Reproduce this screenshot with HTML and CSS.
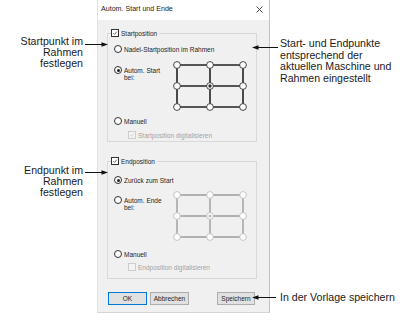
FILE: index.html
```
<!DOCTYPE html>
<html lang="de">
<head>
    <meta charset="UTF-8">
    <title>Autom. Start und Ende</title>
    <link rel="stylesheet" href="styles.css">
</head>
<body>
<div class="page">
    <div class="notes-left">
        <div class="note note-start">
            Startpunkt im<br>Rahmen<br>festlegen
            <svg class="arrow arrow-in" width="23" height="7" viewBox="0 0 23 7"><path d="M0 3.5H18" stroke="#111"/><path d="M23 3.5L16.5 1.2V5.8Z" fill="#111"/></svg>
        </div>
        <div class="note note-end">
            Endpunkt im<br>Rahmen<br>festlegen
            <svg class="arrow arrow-in" width="23" height="7" viewBox="0 0 23 7"><path d="M0 3.5H18" stroke="#111"/><path d="M23 3.5L16.5 1.2V5.8Z" fill="#111"/></svg>
        </div>
    </div>

    <div class="dialog">
        <div class="titlebar">
            <span>Autom. Start und Ende</span>
            <svg class="close" width="7" height="7" viewBox="0 0 7 7"><path d="M0.5 0.5L6.5 6.5M6.5 0.5L0.5 6.5" stroke="#333" stroke-width="0.9"/></svg>
        </div>

        <div class="dialog-body">
            <!-- Startposition -->
            <div class="group group-start">
                <div class="group-title">
                    <span class="check"><svg viewBox="0 0 8 8"><path d="M1.6 4.1L3.3 5.8L6.5 2.1" fill="none" stroke="#222" stroke-width="0.9"/></svg></span>
                    Startposition
                </div>
                <div class="row row-first">
                    <span class="radio"></span>Nadel-Startposition im Rahmen
                </div>
                <div class="row-auto">
                    <div class="auto-choice">
                        <span class="radio on"></span>
                        <span>Autom. Start<br>bei:</span>
                    </div>
                    <svg class="grid" width="74" height="50" viewBox="0 0 74 50">
                        <path d="M4 4H70M4 25H70M4 46H70M4 4V46M37 4V46M70 4V46" stroke="#222" stroke-width="1.6" fill="none"/>
                        <g fill="#fff" stroke="#333" stroke-width="0.9">
                            <circle cx="4" cy="4" r="3.4"/><circle cx="37" cy="4" r="3.4"/><circle cx="70" cy="4" r="3.4"/>
                            <circle cx="4" cy="25" r="3.4"/><circle cx="37" cy="25" r="3.4"/><circle cx="70" cy="25" r="3.4"/>
                            <circle cx="4" cy="46" r="3.4"/><circle cx="37" cy="46" r="3.4"/><circle cx="70" cy="46" r="3.4"/>
                        </g>
                        <circle cx="37" cy="25" r="1.7" fill="#333"/>
                    </svg>
                </div>
                <div class="row row-manual">
                    <span class="radio"></span>Manuell
                </div>
                <div class="row row-digit disabled">
                    <span class="check off"><svg viewBox="0 0 8 8"><path d="M1.6 4.1L3.3 5.8L6.5 2.1" fill="none" stroke="#c4c4c4" stroke-width="0.9"/></svg></span>
                    Startposition digitalisieren
                </div>
            </div>

            <!-- Endposition -->
            <div class="group group-end">
                <div class="group-title">
                    <span class="check"><svg viewBox="0 0 8 8"><path d="M1.6 4.1L3.3 5.8L6.5 2.1" fill="none" stroke="#222" stroke-width="0.9"/></svg></span>
                    Endposition
                </div>
                <div class="row row-first">
                    <span class="radio on"></span>Zurück zum Start
                </div>
                <div class="row-auto">
                    <div class="auto-choice">
                        <span class="radio"></span>
                        <span>Autom. Ende<br>bei:</span>
                    </div>
                    <svg class="grid" width="74" height="50" viewBox="0 0 74 50">
                        <path d="M4 4H70M4 25H70M4 46H70M4 4V46M37 4V46M70 4V46" stroke="#9c9c9c" stroke-width="1.4" fill="none"/>
                        <g fill="#fff" stroke="#bdbdbd" stroke-width="0.9">
                            <circle cx="4" cy="4" r="3.4"/><circle cx="37" cy="4" r="3.4"/><circle cx="70" cy="4" r="3.4"/>
                            <circle cx="4" cy="25" r="3.4"/><circle cx="37" cy="25" r="3.4"/><circle cx="70" cy="25" r="3.4"/>
                            <circle cx="4" cy="46" r="3.4"/><circle cx="37" cy="46" r="3.4"/><circle cx="70" cy="46" r="3.4"/>
                        </g>
                        <circle cx="37" cy="25" r="1.6" fill="#bcbcbc"/>
                    </svg>
                </div>
                <div class="row row-manual">
                    <span class="radio"></span>Manuell
                </div>
                <div class="row row-digit disabled">
                    <span class="check off"></span>
                    Endposition digitalisieren
                </div>
            </div>

            <div class="buttons">
                <button class="btn btn-default">OK</button>
                <button class="btn">Abbrechen</button>
                <button class="btn btn-save">Speichern</button>
            </div>
        </div>
    </div>

    <div class="notes-right">
        <div class="note note-frame">
            Start- und Endpunkte<br>entsprechend der<br>aktuellen Maschine und<br>Rahmen eingestellt
            <svg class="arrow arrow-out" width="26" height="7" viewBox="0 0 26 7"><path d="M5 3.5H26" stroke="#111"/><path d="M0 3.5L6.5 1.2V5.8Z" fill="#111"/></svg>
        </div>
        <div class="note note-save">
            In der Vorlage speichern
            <svg class="arrow arrow-out" width="24" height="7" viewBox="0 0 24 7"><path d="M5 3.5H24" stroke="#111"/><path d="M0 3.5L6.5 1.2V5.8Z" fill="#111"/></svg>
        </div>
    </div>
</div>
</body>
</html>
```

FILE: styles.css
```
html, body {
    margin: 0;
    background: #ffffff;
}
.page {
    display: flex;
    width: 405px;
    height: 327px;
    overflow: hidden;
    font-family: "Liberation Sans", Arial, sans-serif;
}

/* annotations */
.note {
    position: relative;
    font-size: 10.6px;
    line-height: 11px;
    color: #1a1a1a;
}
.notes-left {
    flex: none;
    width: 97px;
    box-sizing: border-box;
    padding-right: 14px;
    text-align: right;
}
.note-start {
    margin-top: 36px;
}
.note-end {
    margin-top: 96px;
}
.arrow {
    position: absolute;
}
.arrow-in {
    left: calc(100% + 2px);
}
.note-start .arrow {
    top: 5px;
}
.note-end .arrow {
    top: 4px;
}
.notes-right {
    flex: 1;
    padding-left: 10px;
}
.note-frame {
    margin-top: 38px;
    line-height: 11.5px;
}
.note-frame .arrow {
    left: -28px;
    top: 6px;
}
.note-save {
    margin-top: 208px;
}
.note-save .arrow {
    left: -28px;
    top: 2px;
}

/* dialog */
.dialog {
    flex: none;
    width: 173px;
    height: 313px;
    box-sizing: border-box;
    background: #f0f0f0;
    border-left: 1px solid #e2e2e2;
    border-right: 1px solid #c2c2c2;
    border-bottom: 1px solid #d6d6d6;
    font-size: 6.5px;
    color: #1e1e1e;
}
.titlebar {
    display: flex;
    align-items: center;
    justify-content: space-between;
    height: 20px;
    box-sizing: border-box;
    padding: 0 6px 2px 3px;
    background: #ffffff;
    font-size: 7.1px;
    color: #222;
}
.close {
    display: block;
}
.dialog-body {
    padding: 13px 12px 0 9px;
}
.group {
    border: 1px solid #d9d9d9;
    padding-left: 6px;
}
.group-title {
    display: flex;
    align-items: center;
    width: max-content;
    height: 10px;
    margin: -6px 0 0 -3px;
    padding: 0 2px 0 0;
    background: #f0f0f0;
}
.group-start {
    padding-bottom: 1px;
}
.group-end {
    margin-top: 19px;
    padding-bottom: 6px;
}
.row {
    display: flex;
    align-items: center;
    height: 10px;
}
.group-start .row-first {
    margin-top: 6px;
}
.group-end .row-first {
    margin-top: 9px;
}
.group-start .row-auto {
    margin-top: 7px;
}
.group-end .row-auto {
    margin-top: 6px;
}
.group-start .row-manual {
    margin-top: 5px;
}
.group-end .row-manual {
    margin-top: 8px;
}
.group-start .row-digit {
    margin-top: 4px;
}
.group-end .row-digit {
    margin-top: 3px;
}
.row-digit {
    padding-left: 14px;
}
.disabled {
    color: #a3a3a3;
}

.row-auto {
    display: flex;
    height: 50px;
}
.auto-choice {
    display: flex;
    align-items: flex-start;
    width: 59px;
    flex: none;
    padding-top: 5.5px;
    line-height: 7px;
}
.grid {
    display: block;
}

/* controls */
.radio {
    position: relative;
    flex: none;
    width: 8px;
    height: 8px;
    box-sizing: border-box;
    margin-right: 2px;
    border: 1px solid #333;
    border-radius: 50%;
    background: #fff;
}
.auto-choice .radio {
    margin-top: -0.5px;
}
.radio.on::after {
    content: "";
    position: absolute;
    left: 1.5px;
    top: 1.5px;
    width: 3px;
    height: 3px;
    border-radius: 50%;
    background: #222;
}
.check {
    flex: none;
    width: 8px;
    height: 8px;
    box-sizing: border-box;
    margin-right: 2px;
    border: 1px solid #333;
    background: #fff;
}
.check svg {
    display: block;
    width: 6px;
    height: 6px;
}
.check.off {
    border-color: #cdcdcd;
    background: #f4f4f4;
}

.buttons {
    display: flex;
    gap: 3px;
    margin: 13px 2px 0 1px;
}
.btn {
    width: 39px;
    height: 13px;
    padding: 0;
    border: 1px solid #adadad;
    background: #e1e1e1;
    font-family: "Liberation Sans", Arial, sans-serif;
    font-size: 6.5px;
    color: #1e1e1e;
}
.btn-default {
    border-color: #0078d7;
}
.btn-save {
    width: 38px;
    margin-left: auto;
}
```
